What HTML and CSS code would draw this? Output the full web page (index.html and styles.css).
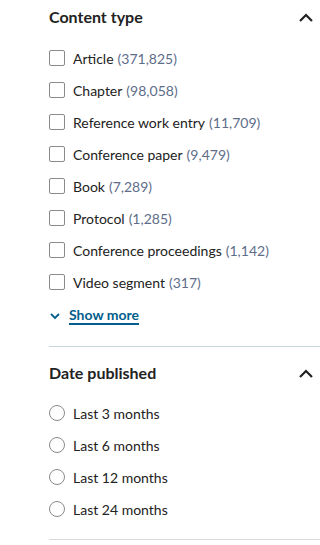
FILE: index.html
```html
<!DOCTYPE html>
<html lang="en">
  <head>
    <meta charset="UTF-8" />
    <meta name="viewport" content="width=device-width, initial-scale=1.0" />
    <title>Filters</title>
    <link rel="stylesheet" href="styles.css">
  </head>
  <body>
    <div class="filters">
      <section class="filter-group">
        <div class="filter-head">
          <h3>Content type</h3>
          <svg class="chevron" width="16" height="10" viewBox="0 0 16 10">
            <path d="M2 9 L8 3 L14 9" fill="none" stroke="#222" stroke-width="2.2" />
          </svg>
        </div>
        <ul class="options">
          <li><span class="box"></span>Article <span class="count">(371,825)</span></li>
          <li><span class="box"></span>Chapter <span class="count">(98,058)</span></li>
          <li><span class="box"></span>Reference work entry <span class="count">(11,709)</span></li>
          <li><span class="box"></span>Conference paper <span class="count">(9,479)</span></li>
          <li><span class="box"></span>Book <span class="count">(7,289)</span></li>
          <li><span class="box"></span>Protocol <span class="count">(1,285)</span></li>
          <li><span class="box"></span>Conference proceedings <span class="count">(1,142)</span></li>
          <li><span class="box"></span>Video segment <span class="count">(317)</span></li>
        </ul>
        <a class="show-more" href="#">
          <svg width="12" height="8" viewBox="0 0 12 8">
            <path d="M2 2 L6 6 L10 2" fill="none" stroke="#025e8d" stroke-width="1.8" />
          </svg>
          <span>Show more</span>
        </a>
      </section>

      <section class="filter-group last">
        <div class="filter-head">
          <h3>Date published</h3>
          <svg class="chevron" width="16" height="10" viewBox="0 0 16 10">
            <path d="M2 9 L8 3 L14 9" fill="none" stroke="#222" stroke-width="2.2" />
          </svg>
        </div>
        <ul class="options">
          <li><span class="radio"></span>Last 3 months</li>
          <li><span class="radio"></span>Last 6 months</li>
          <li><span class="radio"></span>Last 12 months</li>
          <li><span class="radio"></span>Last 24 months</li>
        </ul>
      </section>
    </div>
  </body>
</html>
```

FILE: styles.css
```css
* {
  box-sizing: border-box;
}

body {
  margin: 0;
  background: #fff;
  color: #222;
  font-family: "Lato", "Noto Sans", sans-serif;
}

.filters {
  margin-left: 49px;
}

.filter-group {
  border-bottom: 1px solid #c9d6de;
  padding-bottom: 12px;
}

.filter-group.last {
  border-bottom-color: #dadada;
  padding-top: 9px;
  padding-bottom: 14px;
}

.filter-head {
  display: flex;
  justify-content: space-between;
  align-items: center;
  height: 33px;
  padding-right: 6px;
}

.filter-head h3 {
  margin: 0;
  font-size: 16px;
  font-weight: 700;
}

.options {
  list-style: none;
  margin: 9px 0 0;
  padding: 0;
}

.last .options {
  margin-top: 8px;
}

.options li {
  display: flex;
  align-items: center;
  height: 32px;
  font-size: 14px;
}

.count {
  color: #5e6d8a;
  margin-left: 4px;
}

.box,
.radio {
  width: 16px;
  height: 16px;
  border: 1px solid #8a8a8a;
  border-radius: 2px;
  margin-right: 8px;
  flex-shrink: 0;
}

.radio {
  border-radius: 50%;
}

.show-more {
  display: flex;
  align-items: center;
  gap: 8px;
  height: 36px;
  color: #025e8d;
  font-size: 14px;
  font-weight: 700;
  text-decoration: none;
}

.show-more span {
  border-bottom: 2px solid #025e8d;
  line-height: 16px;
}
```
